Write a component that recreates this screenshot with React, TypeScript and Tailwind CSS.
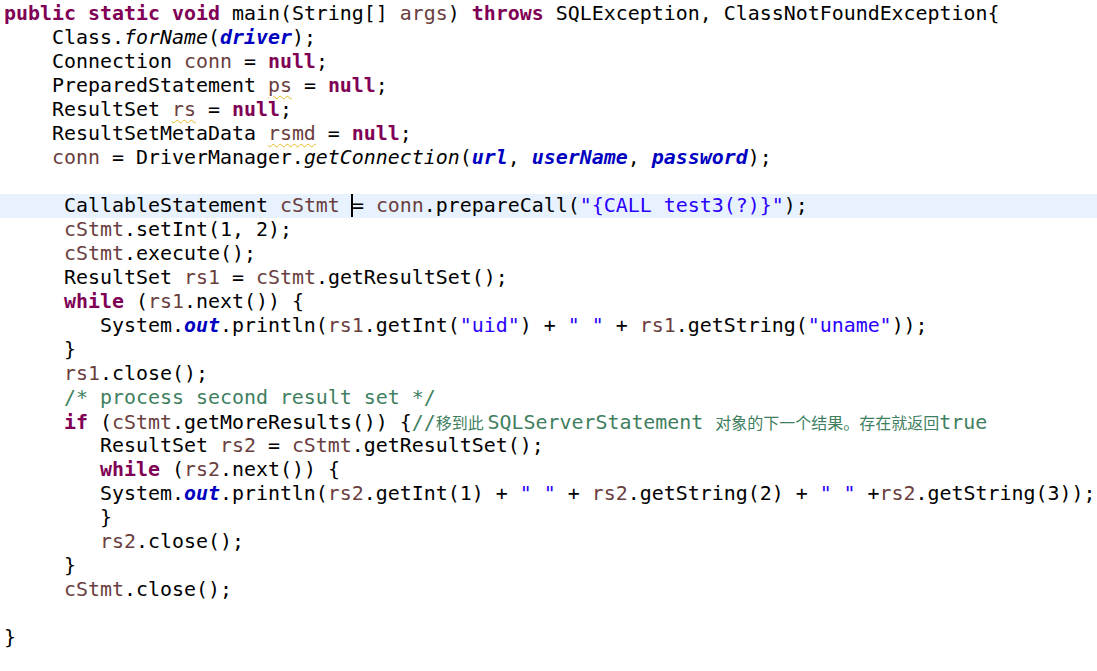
import type { ReactNode } from 'react'

const K = ({ children }: { children: ReactNode }) => (
  <span className="font-bold text-[#7f0055]">{children}</span>
)
const V = ({ children }: { children: ReactNode }) => (
  <span className="text-[#6a3e3e]">{children}</span>
)
const S = ({ children }: { children: ReactNode }) => (
  <span className="text-[#2a00ff]">{children}</span>
)
const F = ({ children }: { children: ReactNode }) => (
  <span className="font-bold italic text-[#0000c0]">{children}</span>
)
const I = ({ children }: { children: ReactNode }) => <span className="italic">{children}</span>
const C = ({ children }: { children: ReactNode }) => (
  <span className="text-[#3f7f5f]">{children}</span>
)
const W = ({ children }: { children: ReactNode }) => (
  <span className="underline decoration-wavy decoration-[#e8b923] decoration-1 underline-offset-[3px]">
    {children}
  </span>
)
const Cjk = ({ children }: { children: ReactNode }) => (
  <span className="text-[16px] font-['Noto_Sans_CJK_SC',sans-serif]">{children}</span>
)

function Line({ children, active }: { children?: ReactNode; active?: boolean }) {
  return (
    <div className={`h-6 whitespace-pre pl-[4px] ${active ? 'bg-[#e8f2fe]' : ''}`}>
      {children ?? ' '}
    </div>
  )
}

export default function App() {
  return (
    <div className="min-h-screen w-[1097px] overflow-hidden bg-white pt-[2px] text-[19.93px] leading-6 text-black font-['DejaVu_Sans_Mono',monospace]">
      <Line>
        <K>public</K> <K>static</K> <K>void</K> main(String[] <V>args</V>) <K>throws</K> SQLException, ClassNotFoundException{'{'}
      </Line>
      <Line>
        {'    '}Class.<I>forName</I>(<F>driver</F>);
      </Line>
      <Line>
        {'    '}Connection <V>conn</V> = <K>null</K>;
      </Line>
      <Line>
        {'    '}PreparedStatement <W><V>ps</V></W> = <K>null</K>;
      </Line>
      <Line>
        {'    '}ResultSet <W><V>rs</V></W> = <K>null</K>;
      </Line>
      <Line>
        {'    '}ResultSetMetaData <W><V>rsmd</V></W> = <K>null</K>;
      </Line>
      <Line>
        {'    '}<V>conn</V> = DriverManager.<I>getConnection</I>(<F>url</F>, <F>userName</F>, <F>password</F>);
      </Line>
      <Line />
      <Line active>
        {'     '}CallableStatement <V>cStmt</V> <span className="relative inline-block h-0 w-0"><span className="absolute left-[-1px] top-[-18px] h-[23px] w-[2px] bg-black" /></span>= <V>conn</V>.prepareCall(<S>"{'{'}CALL test3(?){'}'}"</S>);
      </Line>
      <Line>
        {'     '}<V>cStmt</V>.setInt(1, 2);
      </Line>
      <Line>
        {'     '}<V>cStmt</V>.execute();
      </Line>
      <Line>
        {'     '}ResultSet <V>rs1</V> = <V>cStmt</V>.getResultSet();
      </Line>
      <Line>
        {'     '}<K>while</K> (<V>rs1</V>.next()) {'{'}
      </Line>
      <Line>
        {'        '}System.<F>out</F>.println(<V>rs1</V>.getInt(<S>"uid"</S>) + <S>" "</S> + <V>rs1</V>.getString(<S>"uname"</S>));
      </Line>
      <Line>{'     }'}</Line>
      <Line>
        {'     '}<V>rs1</V>.close();
      </Line>
      <Line>
        {'     '}<C>/* process second result set */</C>
      </Line>
      <Line>
        {'     '}<K>if</K> (<V>cStmt</V>.getMoreResults()) {'{'}
        <C>
          //<Cjk>移到此 </Cjk>SQLServerStatement <Cjk>对象的下一个结果。存在就返回</Cjk>true
        </C>
      </Line>
      <Line>
        {'        '}ResultSet <V>rs2</V> = <V>cStmt</V>.getResultSet();
      </Line>
      <Line>
        {'        '}<K>while</K> (<V>rs2</V>.next()) {'{'}
      </Line>
      <Line>
        {'        '}System.<F>out</F>.println(<V>rs2</V>.getInt(1) + <S>" "</S> + <V>rs2</V>.getString(2) + <S>" "</S> +<V>rs2</V>.getString(3));
      </Line>
      <Line>{'        }'}</Line>
      <Line>
        {'        '}<V>rs2</V>.close();
      </Line>
      <Line>{'     }'}</Line>
      <Line>
        {'     '}<V>cStmt</V>.close();
      </Line>
      <Line />
      <Line>{'}'}</Line>
    </div>
  )
}
